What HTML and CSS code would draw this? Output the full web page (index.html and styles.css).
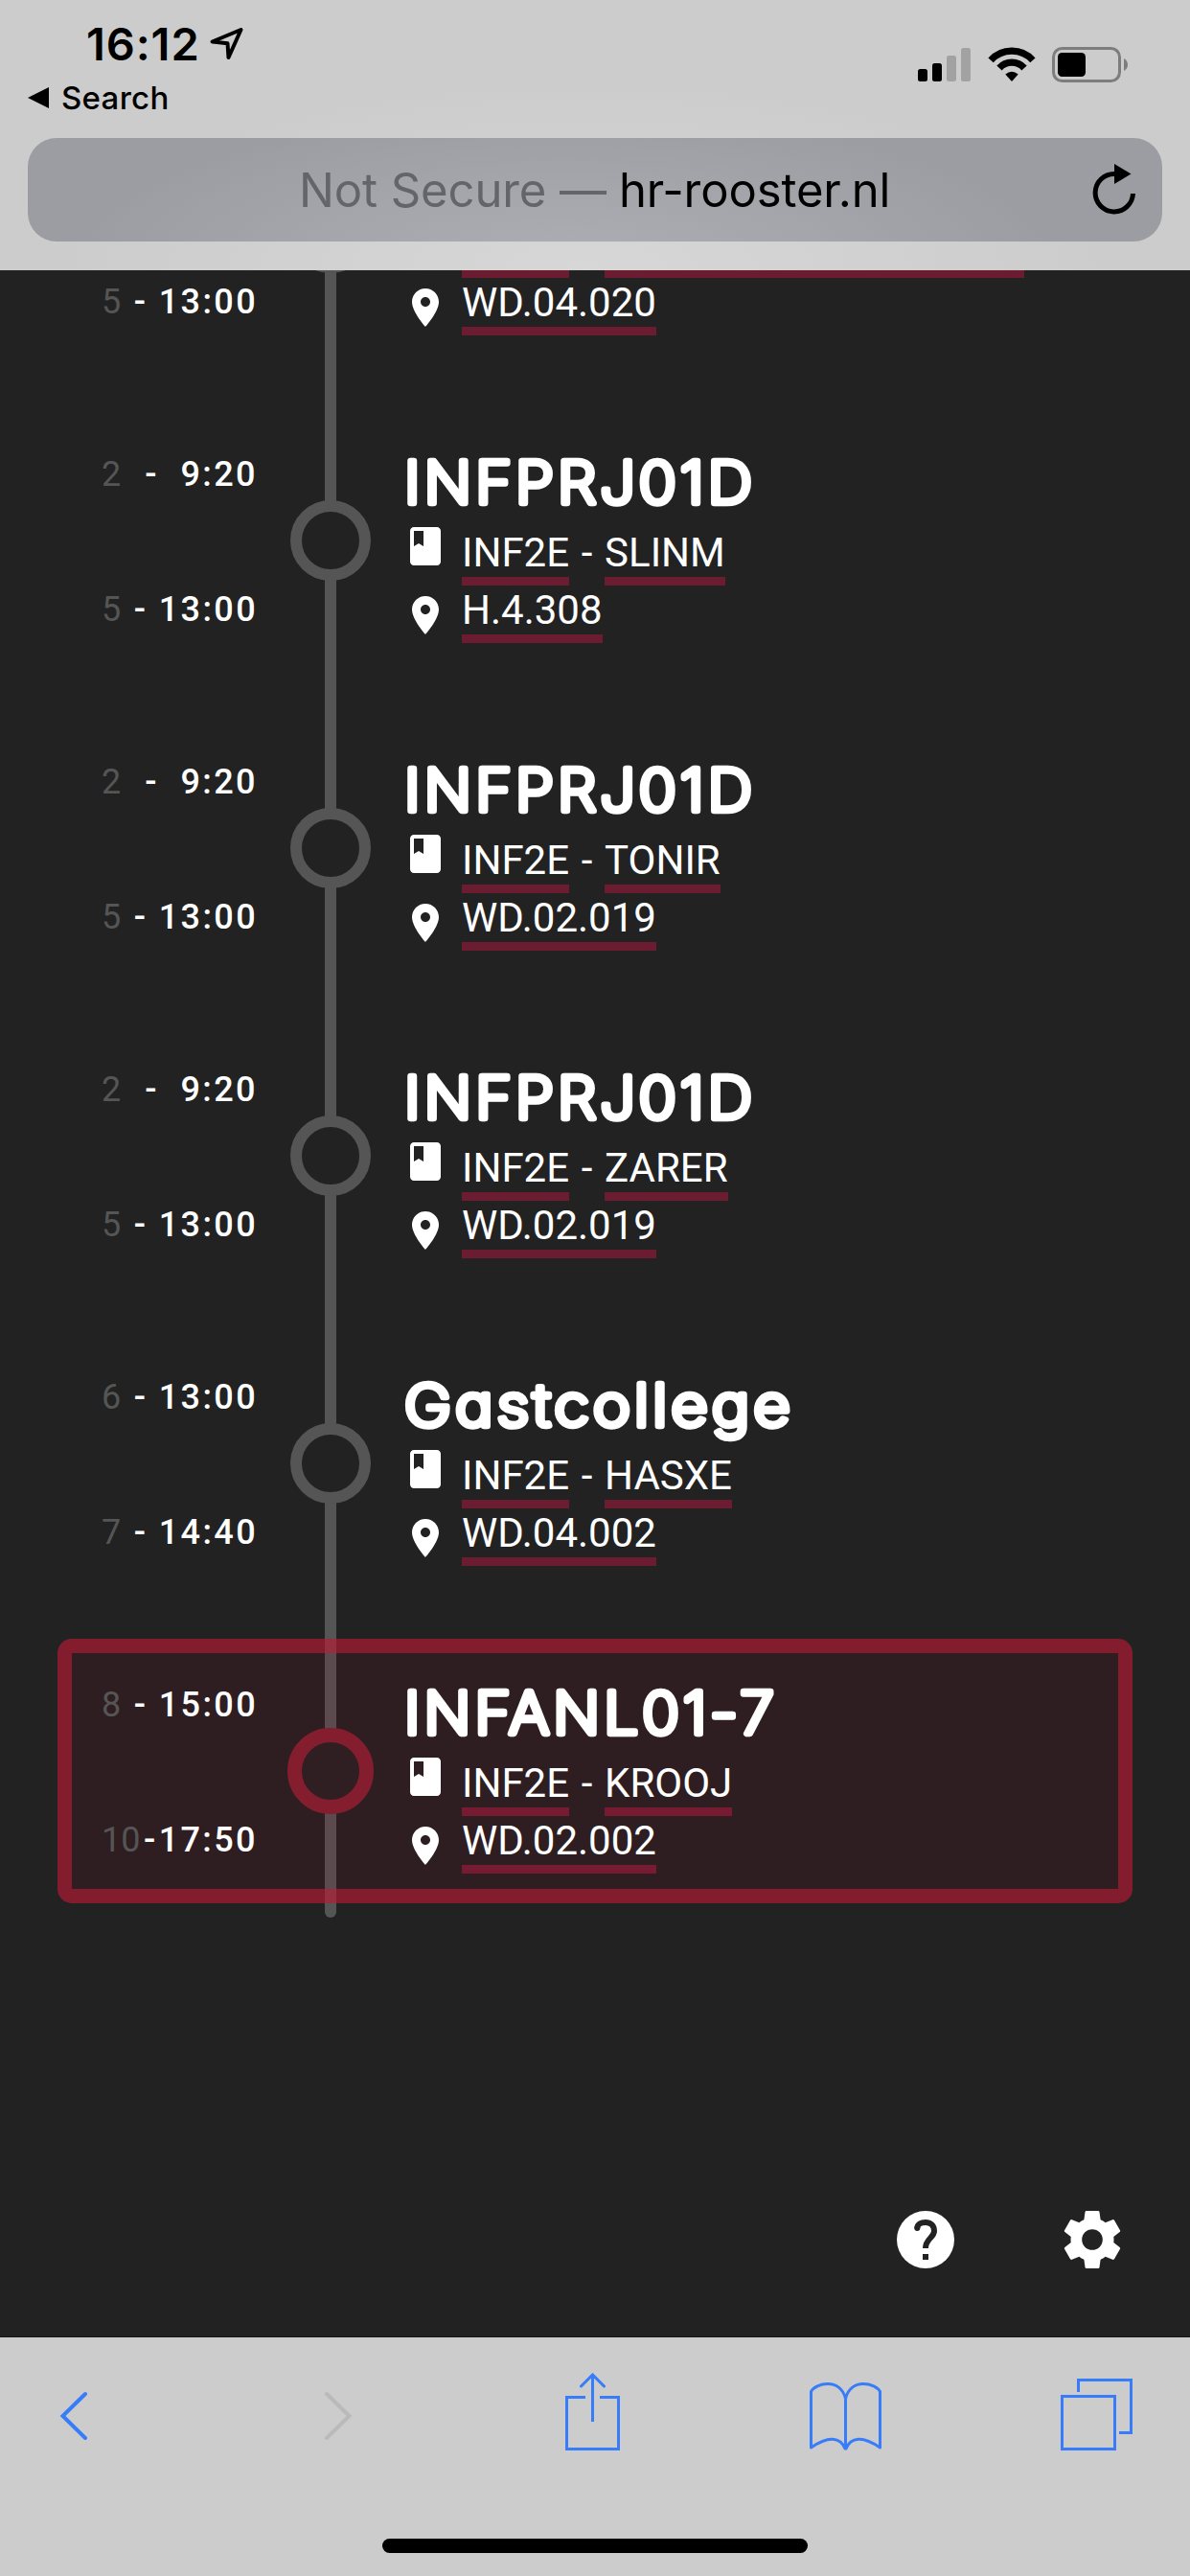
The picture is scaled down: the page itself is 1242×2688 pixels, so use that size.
FILE: index.html
```html
<!DOCTYPE html>
<html lang="nl">
<head>
<meta charset="utf-8">
<title>hr-rooster.nl</title>
<link rel="stylesheet" href="styles.css">
</head>
<body>
<svg class="defs" aria-hidden="true">
  <symbol id="i-book" viewBox="0 0 24 24"><path d="M18 2H6c-1.1 0-2 .9-2 2v16c0 1.1.9 2 2 2h12c1.1 0 2-.9 2-2V4c0-1.1-.9-2-2-2zM6 4h5v8l-2.5-1.5L6 12V4z"/></symbol>
  <symbol id="i-pin" viewBox="0 0 24 24"><path d="M12 2C8.13 2 5 5.13 5 9c0 5.25 7 13 7 13s7-7.75 7-13c0-3.87-3.13-7-7-7zm0 9.500c-1.380 0-2.500-1.120-2.500-2.500s1.120-2.500 2.500-2.500 2.500 1.120 2.500 2.500-1.120 2.500-2.500 2.500z"/></symbol>
</svg>

<header class="browser-top">
  <div class="status">
    <div class="status-left">
      <div class="clock"><span class="time-now">16:12</span>
        <svg class="loc" viewBox="0 0 36 36"><path d="M3.500 16.500 33.500 4 20.500 33 19.500 18.300Z"/></svg>
      </div>
      <div class="back-app"><svg class="tri" viewBox="0 0 22 22"><path d="M22 0V22L0 11Z"/></svg><span class="back-label">Search</span></div>
    </div>
    <div class="status-right">
      <svg class="signal" viewBox="0 0 56 36"><rect x="0" y="22" width="10" height="13" rx="2.500"/><rect x="15" y="16" width="10" height="19" rx="2.500"/><g fill="#a2a2a2"><rect x="30" y="8" width="10" height="27" rx="2.500"/><rect x="45" y="0" width="10" height="35" rx="2.500"/></g></svg>
      <svg class="wifi" viewBox="0 0 50 36"><path d="M3.100 13.800A29.500 29.500 0 0 1 46.900 13.800M12 22A17.500 17.500 0 0 1 38 22" fill="none" stroke="#000" stroke-width="7.200"/><path d="M18.300 28.500Q25 23 31.700 28.500L25 36Z"/></svg>
      <svg class="battery" viewBox="0 0 80 37"><rect x="1.500" y="1.500" width="69" height="34" rx="9" fill="none" stroke="#7d7d7d" stroke-width="3"/><rect x="6" y="6" width="29" height="25" rx="4.500"/><path fill="#7d7d7d" d="M75 12q4 2.500 4 6.500t-4 6.500z"/></svg>
    </div>
  </div>
  <div class="url-bar">
    <div class="url"><span class="insecure">Not Secure —</span><span class="host">hr-rooster.nl</span></div>
    <svg class="reload" viewBox="0 0 48 56"><path d="M24 12.500A19.700 19.700 0 1 0 43.500 33" fill="none" stroke="#000" stroke-width="5"/><path d="M24 2V23L41.500 12.500Z"/></svg>
  </div>
</header>

<main class="schedule">
  <div class="rail"></div>

  <article class="lesson">
    <div class="times"><div class="time"><span class="hour">2</span><span>-</span><b>9:20</b></div><div class="time"><span class="hour">5</span><span>-</span><b>13:00</b></div></div>
    <div class="node"></div>
    <div class="info">
      <svg class="title"></svg>
      <div class="row"><svg class="icon book"><use href="#i-book"/></svg><span class="tag">INF2E</span><span class="sep">-</span><span class="tag staff"></span></div>
      <div class="row"><svg class="icon pin"><use href="#i-pin"/></svg><span class="tag">WD.04.020</span></div>
    </div>
  </article>

  <article class="lesson">
    <div class="times"><div class="time"><span class="hour">2</span><span>-</span><b>9:20</b></div><div class="time"><span class="hour">5</span><span>-</span><b>13:00</b></div></div>
    <div class="node"></div>
    <div class="info">
      <svg class="title"><text x="2" y="62" textLength="367" lengthAdjust="spacingAndGlyphs">INFPRJ01D</text></svg>
      <div class="row"><svg class="icon book"><use href="#i-book"/></svg><span class="tag">INF2E</span><span class="sep">-</span><span class="tag">SLINM</span></div>
      <div class="row"><svg class="icon pin"><use href="#i-pin"/></svg><span class="tag">H.4.308</span></div>
    </div>
  </article>

  <article class="lesson">
    <div class="times"><div class="time"><span class="hour">2</span><span>-</span><b>9:20</b></div><div class="time"><span class="hour">5</span><span>-</span><b>13:00</b></div></div>
    <div class="node"></div>
    <div class="info">
      <svg class="title"><text x="2" y="62" textLength="367" lengthAdjust="spacingAndGlyphs">INFPRJ01D</text></svg>
      <div class="row"><svg class="icon book"><use href="#i-book"/></svg><span class="tag">INF2E</span><span class="sep">-</span><span class="tag">TONIR</span></div>
      <div class="row"><svg class="icon pin"><use href="#i-pin"/></svg><span class="tag">WD.02.019</span></div>
    </div>
  </article>

  <article class="lesson">
    <div class="times"><div class="time"><span class="hour">2</span><span>-</span><b>9:20</b></div><div class="time"><span class="hour">5</span><span>-</span><b>13:00</b></div></div>
    <div class="node"></div>
    <div class="info">
      <svg class="title"><text x="2" y="62" textLength="367" lengthAdjust="spacingAndGlyphs">INFPRJ01D</text></svg>
      <div class="row"><svg class="icon book"><use href="#i-book"/></svg><span class="tag">INF2E</span><span class="sep">-</span><span class="tag">ZARER</span></div>
      <div class="row"><svg class="icon pin"><use href="#i-pin"/></svg><span class="tag">WD.02.019</span></div>
    </div>
  </article>

  <article class="lesson">
    <div class="times"><div class="time"><span class="hour">6</span><span>-</span><b>13:00</b></div><div class="time"><span class="hour">7</span><span>-</span><b>14:40</b></div></div>
    <div class="node"></div>
    <div class="info">
      <svg class="title"><text x="2" y="62" textLength="407" lengthAdjust="spacingAndGlyphs">Gastcollege</text></svg>
      <div class="row"><svg class="icon book"><use href="#i-book"/></svg><span class="tag">INF2E</span><span class="sep">-</span><span class="tag">HASXE</span></div>
      <div class="row"><svg class="icon pin"><use href="#i-pin"/></svg><span class="tag">WD.04.002</span></div>
    </div>
  </article>

  <article class="lesson current">
    <div class="times"><div class="time"><span class="hour">8</span><span>-</span><b>15:00</b></div><div class="time"><span class="hour">10</span><span>-</span><b>17:50</b></div></div>
    <div class="node"></div>
    <div class="info">
      <svg class="title"><text x="2" y="62" textLength="390" lengthAdjust="spacingAndGlyphs">INFANL01-7</text></svg>
      <div class="row"><svg class="icon book"><use href="#i-book"/></svg><span class="tag">INF2E</span><span class="sep">-</span><span class="tag">KROOJ</span></div>
      <div class="row"><svg class="icon pin"><use href="#i-pin"/></svg><span class="tag">WD.02.002</span></div>
    </div>
  </article>

  <nav class="actions">
    <svg viewBox="0 0 72 72"><circle cx="36" cy="36" r="30"/><path d="M27.300 24.200C27.300 20 31 18 36 18S45 21 45 27C45 34 36 35 36 45" fill="none" stroke="#222" stroke-width="6"/><circle cx="27.300" cy="24" r="3" fill="#222"/><path d="M33 51h6v6h-6z" fill="#222"/></svg>
    <svg viewBox="0 0 24 24"><path d="M12 15.600a3.600 3.600 0 1 1 0-7.200 3.600 3.600 0 0 1 0 7.200m7.430-2.630c.04-.32.07-.64.07-.97s-.03-.66-.07-1l2.110-1.630c.19-.15.24-.42.12-.64l-2-3.460c-.12-.22-.39-.31-.61-.22l-2.490 1c-.52-.39-1.060-.73-1.690-.98l-.37-2.650A.506.506 0 0 0 14 2h-4c-.25 0-.46.180-.5.420l-.37 2.650c-.63.250-1.170.590-1.690.980l-2.490-1c-.22-.09-.49 0-.61.220l-2 3.460c-.13.220-.07.490.120.640L4.570 11c-.04.340-.07.670-.07 1s.030.650.070.970l-2.110 1.660c-.19.150-.25.420-.12.640l2 3.460c.12.220.39.300.61.220l2.490-1.010c.52.400 1.060.740 1.690.990l.37 2.650c.04.240.25.420.5.420h4c.25 0 .46-.18.5-.42l.37-2.650c.63-.26 1.170-.59 1.690-.99l2.490 1.010c.22.080.49 0 .61-.22l2-3.460c.12-.22.070-.49-.12-.64z"/></svg>
  </nav>
</main>

<footer class="browser-bottom">
  <div class="tools">
    <svg viewBox="0 0 90 90"><path d="M54 22 30.500 45 54 68" stroke-width="4" stroke-linecap="round"/></svg>
    <svg viewBox="0 0 90 90" class="off"><path d="M34 22 57.500 45 34 68" stroke-width="4" stroke-linecap="round"/></svg>
    <svg viewBox="0 0 90 90"><path d="M38 25.500H18.500V79.500H72.500V25.500H53M45.500 3V51"/><path d="M33.500 14 45.500 2 57.500 14" stroke-linecap="round"/></svg>
    <svg viewBox="0 0 90 90"><path d="M46.500 80V27C44 16 36 11.500 28 11.500C20 11.500 13 15 10.500 19.500V78C28 66 41 66 46.500 80M46.500 27C49 16 57 11.500 65 11.500C73 11.500 80 15 82.500 19.500V78C65 66 52 66 46.500 80" stroke-linejoin="round"/></svg>
    <svg viewBox="0 0 90 90"><path d="M14.500 24.500h55v55h-55zM31.500 20V7.500h55v55H74"/></svg>
  </div>
  <div class="home"></div>
</footer>
</body>
</html>
```

FILE: styles.css
```css
* { box-sizing: border-box; }
html, body { margin: 0; height: 100%; }
body {
  display: flex;
  flex-direction: column;
  width: 1242px;
  height: 2688px;
  overflow: hidden;
  background: #222;
  color: #fff;
  font-family: Roboto, "Liberation Sans", sans-serif;
}
svg { display: block; flex: none; }
.defs { position: absolute; width: 0; height: 0; }

/* Browser top bar */
.browser-top {
  flex: none;
  height: 282px;
  padding: 0 29px;
  background: radial-gradient(ellipse 560px 200px at 610px 282px, #d7d7d7, #d2d2d2 45%, #cccccc);
  color: #000;
  font-family: Inter, "Liberation Sans", sans-serif;
  position: relative;
  z-index: 2;
}
.status { display: flex; justify-content: space-between; height: 144px; }
.status-left { padding-top: 17px; }
.clock { display: flex; align-items: center; gap: 9px; height: 58px; padding-left: 61px; }
.time-now { font-size: 47px; font-weight: 600; line-height: 58px; letter-spacing: 0.9px; }
.loc { width: 36px; height: 36px; margin-top: -3px; fill: none; stroke: #000; stroke-width: 4px; stroke-linejoin: round; }
.back-app { display: flex; align-items: center; gap: 13px; height: 50px; padding-top: 4px; }
.tri { width: 22px; height: 22px; }
.back-label { font-size: 33px; font-weight: 450; line-height: 44px; letter-spacing: 0.3px; }
.status-right { display: flex; gap: 17px; padding: 49px 35px 0 0; }
.signal { width: 56px; height: 36px; margin-top: 1px; }
.wifi { width: 50px; height: 36px; }
.battery { width: 80px; height: 37px; }
.url-bar {
  display: flex;
  align-items: center;
  justify-content: flex-end;
  height: 108px;
  padding-right: 26px;
  border-radius: 30px;
  background: radial-gradient(ellipse 520px 160px at 560px 130px, #adaeb3, #a5a6ab 50%, #9c9da2);
}
.url { display: flex; gap: 13px; flex: 1; padding: 1px 0 0 283px; font-size: 49px; line-height: 60px; letter-spacing: -0.1px; white-space: nowrap; }
.insecure { color: #646569; }
.reload { width: 48px; height: 56px; margin-top: -2px; }

/* Timeline */
.schedule { position: relative; flex: none; height: 2157px; padding: 0 60px; border-bottom: 1px solid #171717; display: flex; flex-direction: column; }
.rail { position: absolute; left: 339px; top: 0; width: 12px; height: 1719px; border-radius: 0 0 6px 6px; background: #555; }
.lesson {
  position: relative;
  flex: none;
  display: grid;
  grid-template-columns: 240px 90px 1fr;
  align-items: center;
  height: 276px;
  margin-bottom: 45px;
}
.lesson:nth-child(2) { margin-top: -177px; }
.times { display: flex; flex-direction: column; gap: 99px; padding: 2px 31px 0 46px; }
.time { display: flex; justify-content: space-between; font-size: 36px; line-height: 42px; font-weight: 500; }
.time b { font-weight: 500; letter-spacing: 2.400px; }
.time .hour { color: #555; font-weight: 400; }
.node { justify-self: center; width: 84px; height: 84px; border: 12px solid #555; border-radius: 50%; background: #222; }
.info { padding-left: 30px; padding-top: 8px; }
.title { width: 700px; height: 90px; overflow: visible; }
.title text {
  font-family: Inter, sans-serif;
  font-size: 60px;
  font-weight: 200;
  font-feature-settings: "cv11";
  letter-spacing: 4px;
  fill: #fff;
  stroke: #fff;
  stroke-width: 6.500px;
  stroke-linejoin: round;
  stroke-linecap: round;
}
.row { display: flex; height: 60px; font-size: 42px; line-height: 48px; }
.icon { width: 48px; height: 48px; margin-right: 14px; fill: #fff; }
.book { margin-top: -7px; }
.pin { margin-top: 5px; }
.tag { height: 58px; border-bottom: 9px solid #6b1c31; }
.sep { width: 37px; text-align: center; }
.staff { width: 438px; }
.current::before {
  content: "";
  position: absolute;
  inset: 0;
  border: 15px solid rgba(185, 28, 53, .65);
  border-radius: 15px;
  background: rgba(142, 9, 34, .12) padding-box;
}
.current > * { position: relative; }
.current .node { width: 90px; height: 90px; border: 15px solid #841e2e; background: #2f1f22; }
.current .tag { border-color: #761b32; }
.actions { display: flex; justify-content: flex-end; gap: 102px; padding: 270px 6px 0 0; fill: #fff; }
.actions svg { width: 72px; height: 72px; }

/* Browser bottom bar */
.browser-bottom { flex: 1; background: #ccc; position: relative; z-index: 2; }
.tools { display: grid; grid-template-columns: 272px 266px 263px 258px 90px; padding: 37px 0 0 35px; }
.tools svg { width: 90px; height: 90px; fill: none; stroke: #377cf8; stroke-width: 3px; }
.tools .off { stroke: #bababa; }
.home { width: 444px; height: 15px; margin: 83px auto 0; border-radius: 8px; background: #000; }
```
